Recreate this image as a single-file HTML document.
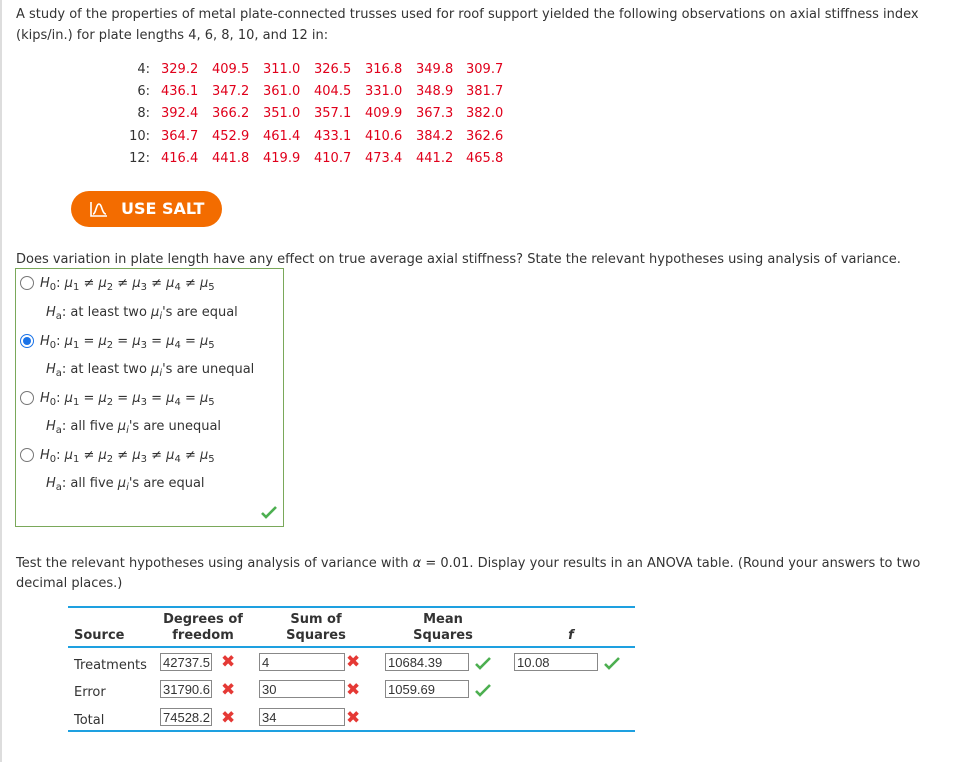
<!DOCTYPE html>
<html><head><style>
body{margin:0;width:965px;height:762px;background:#fff;font-family:"DejaVu Sans","Liberation Sans",sans-serif;font-size:13px;color:#333;position:relative;overflow:hidden}
.a{position:absolute;white-space:nowrap}
.lb{position:absolute;left:0;top:0;width:2px;height:762px;background:#ddd}
.r{color:#e0001b}
.btn{position:absolute;left:71px;top:191px;width:151px;height:36px;border-radius:18px;background:#f36c00;color:#fff;font-weight:bold;font-size:16px;line-height:36px}
.box{position:absolute;left:15px;top:268px;width:267px;height:257px;border:1px solid #7aa85a}
.rad{position:absolute;width:12px;height:12px;border:1px solid #777;border-radius:50%;background:#fff}
.sel{border-color:#1a73e8}
.sel::after{content:"";position:absolute;left:2px;top:2px;width:8px;height:8px;border-radius:50%;background:#1a73e8}
i{font-style:italic}
sub{font-size:10px;vertical-align:-3px;line-height:0}
.hl{position:absolute;left:68px;width:567px;height:2px;background:#1ea0e0}
.th{position:absolute;font-weight:bold;text-align:center;line-height:16px}
.in{position:absolute;height:18px;border:1px solid #888;font-family:"Liberation Sans",sans-serif;font-size:13px;line-height:17px;padding-left:2px;box-sizing:border-box;overflow:hidden;background:#fff;color:#333}
.x{position:absolute;color:#e53935;font-weight:bold;font-size:17px}
.ck{position:absolute}
.row{position:absolute;left:0;height:20px}
.row span{position:absolute;color:#e0001b}
.row b{position:absolute;left:0;width:150px;text-align:right;font-weight:normal;color:#333}
</style></head><body>
<div class="lb"></div>
<div class="a" style="left:16px;top:7px">A study of the properties of metal plate-connected trusses used for roof support yielded the following observations on axial stiffness index</div>
<div class="a" style="left:16px;top:28px">(kips/in.) for plate lengths 4, 6, 8, 10, and 12 in:</div>

<div class="row" style="top:62px"><b>4:</b><span style="left:161px">329.2</span><span style="left:212px">409.5</span><span style="left:263px">311.0</span><span style="left:314px">326.5</span><span style="left:365px">316.8</span><span style="left:416px">349.8</span><span style="left:466px">309.7</span></div>
<div class="row" style="top:84px"><b>6:</b><span style="left:161px">436.1</span><span style="left:212px">347.2</span><span style="left:263px">361.0</span><span style="left:314px">404.5</span><span style="left:365px">331.0</span><span style="left:416px">348.9</span><span style="left:466px">381.7</span></div>
<div class="row" style="top:106px"><b>8:</b><span style="left:161px">392.4</span><span style="left:212px">366.2</span><span style="left:263px">351.0</span><span style="left:314px">357.1</span><span style="left:365px">409.9</span><span style="left:416px">367.3</span><span style="left:466px">382.0</span></div>
<div class="row" style="top:129px"><b>10:</b><span style="left:161px">364.7</span><span style="left:212px">452.9</span><span style="left:263px">461.4</span><span style="left:314px">433.1</span><span style="left:365px">410.6</span><span style="left:416px">384.2</span><span style="left:466px">362.6</span></div>
<div class="row" style="top:151px"><b>12:</b><span style="left:161px">416.4</span><span style="left:212px">441.8</span><span style="left:263px">419.9</span><span style="left:314px">410.7</span><span style="left:365px">473.4</span><span style="left:416px">441.2</span><span style="left:466px">465.8</span></div>

<div class="btn"><svg style="position:absolute;left:19px;top:10px" width="18" height="16" viewBox="0 0 18 16" fill="none" stroke="#fff" stroke-width="1.6"><path d="M1 1V15H17"/><path d="M3 13C6 13 6 3 9 3C12 3 12 13 16 13"/></svg><span style="position:absolute;left:50px">USE SALT</span></div>

<div class="a" style="left:16px;top:252px">Does variation in plate length have any effect on true average axial stiffness? State the relevant hypotheses using analysis of variance.</div>
<div class="box"></div>
<div class="rad" style="left:20px;top:276px"></div>
<div class="a" style="left:40px;top:276px"><i>H</i><sub>0</sub>: <i>μ</i><sub>1</sub> ≠ <i>μ</i><sub>2</sub> ≠ <i>μ</i><sub>3</sub> ≠ <i>μ</i><sub>4</sub> ≠ <i>μ</i><sub>5</sub></div>
<div class="a" style="left:46px;top:305px"><i>H</i><sub>a</sub>: at least two <i>μ</i><sub><i>i</i></sub>'s are equal</div>
<div class="rad sel" style="left:20px;top:334px"></div>
<div class="a" style="left:40px;top:334px"><i>H</i><sub>0</sub>: <i>μ</i><sub>1</sub> = <i>μ</i><sub>2</sub> = <i>μ</i><sub>3</sub> = <i>μ</i><sub>4</sub> = <i>μ</i><sub>5</sub></div>
<div class="a" style="left:46px;top:362px"><i>H</i><sub>a</sub>: at least two <i>μ</i><sub><i>i</i></sub>'s are unequal</div>
<div class="rad" style="left:20px;top:391px"></div>
<div class="a" style="left:40px;top:391px"><i>H</i><sub>0</sub>: <i>μ</i><sub>1</sub> = <i>μ</i><sub>2</sub> = <i>μ</i><sub>3</sub> = <i>μ</i><sub>4</sub> = <i>μ</i><sub>5</sub></div>
<div class="a" style="left:46px;top:419px"><i>H</i><sub>a</sub>: all five <i>μ</i><sub><i>i</i></sub>'s are unequal</div>
<div class="rad" style="left:20px;top:448px"></div>
<div class="a" style="left:40px;top:448px"><i>H</i><sub>0</sub>: <i>μ</i><sub>1</sub> ≠ <i>μ</i><sub>2</sub> ≠ <i>μ</i><sub>3</sub> ≠ <i>μ</i><sub>4</sub> ≠ <i>μ</i><sub>5</sub></div>
<div class="a" style="left:46px;top:476px"><i>H</i><sub>a</sub>: all five <i>μ</i><sub><i>i</i></sub>'s are equal</div>
<svg class="ck" style="left:261px;top:505px" width="16" height="14" viewBox="0 0 16 14"><path d="M1 8L5 12L15 2" stroke="#4caf50" stroke-width="2.6" fill="none"/></svg>

<div class="a" style="left:16px;top:556px">Test the relevant hypotheses using analysis of variance with <i>α</i> = 0.01. Display your results in an ANOVA table. (Round your answers to two</div>
<div class="a" style="left:16px;top:576px">decimal places.)</div>

<div class="hl" style="top:606px"></div>
<div class="hl" style="top:646px"></div>
<div class="hl" style="top:730px"></div>
<div class="th" style="left:74px;top:628px;text-align:left">Source</div>
<div class="th" style="left:148px;top:612px;width:110px">Degrees of<br>freedom</div>
<div class="th" style="left:258px;top:612px;width:116px">Sum of<br>Squares</div>
<div class="th" style="left:384px;top:612px;width:118px">Mean<br>Squares</div>
<div class="th" style="left:565px;top:628px;width:12px"><i>f</i></div>

<div class="a" style="left:74px;top:658px">Treatments</div>
<div class="a" style="left:74px;top:685px">Error</div>
<div class="a" style="left:74px;top:713px">Total</div>

<div class="in" style="left:160px;top:653px;width:52px">42737.5</div><div class="x" style="left:221px;top:652px">✖</div>
<div class="in" style="left:160px;top:680px;width:52px">31790.6</div><div class="x" style="left:221px;top:680px">✖</div>
<div class="in" style="left:160px;top:708px;width:52px">74528.2</div><div class="x" style="left:221px;top:708px">✖</div>
<div class="in" style="left:259px;top:653px;width:86px">4</div><div class="x" style="left:346px;top:652px">✖</div>
<div class="in" style="left:259px;top:680px;width:86px">30</div><div class="x" style="left:346px;top:680px">✖</div>
<div class="in" style="left:259px;top:708px;width:86px">34</div><div class="x" style="left:346px;top:708px">✖</div>
<div class="in" style="left:385px;top:653px;width:84px">10684.39</div>
<div class="in" style="left:385px;top:680px;width:84px">1059.69</div>
<div class="in" style="left:514px;top:653px;width:84px">10.08</div>
<svg class="ck" style="left:475px;top:656px" width="16" height="14" viewBox="0 0 16 14"><path d="M1 8L5 12L15 2" stroke="#4caf50" stroke-width="2.6" fill="none"/></svg>
<svg class="ck" style="left:475px;top:683px" width="16" height="14" viewBox="0 0 16 14"><path d="M1 8L5 12L15 2" stroke="#4caf50" stroke-width="2.6" fill="none"/></svg>
<svg class="ck" style="left:604px;top:656px" width="16" height="14" viewBox="0 0 16 14"><path d="M1 8L5 12L15 2" stroke="#4caf50" stroke-width="2.6" fill="none"/></svg>
</body></html>
